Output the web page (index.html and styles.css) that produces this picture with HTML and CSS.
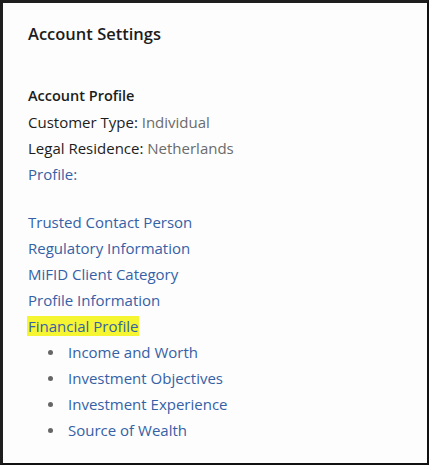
FILE: index.html
```html
<!DOCTYPE html>
<html>
<head>
<meta charset="utf-8">
<link rel="stylesheet" href="styles.css">
</head>
<body>
<div class="frame">
  <h1 class="title">Account Settings</h1>
  <h2 class="section">Account Profile</h2>
  <div class="row">Customer Type: <span class="val">Individual</span></div>
  <div class="row">Legal Residence: <span class="val">Netherlands</span></div>
  <div class="row"><a class="link">Profile:</a></div>
  <ul class="links">
    <li><a class="link">Trusted Contact Person</a></li>
    <li><a class="link">Regulatory Information</a></li>
    <li><a class="link">MiFID Client Category</a></li>
    <li><a class="link">Profile Information</a></li>
    <li><a class="link hl">Financial Profile</a>
      <ul class="sub">
        <li><a class="link">Income and Worth</a></li>
        <li><a class="link">Investment Objectives</a></li>
        <li><a class="link">Investment Experience</a></li>
        <li><a class="link">Source of Wealth</a></li>
      </ul>
    </li>
  </ul>
</div>
</body>
</html>
```
FILE: styles.css
```css
html, body { margin: 0; padding: 0; background: #fff; }
body { font-family: "Open Sans", "Noto Sans", sans-serif; color: #1c1c1c; }
.frame {
  box-sizing: border-box;
  width: 429px;
  height: 465px;
  border-top: 3px solid #1e1e1e;
  border-left: 3px solid #1e1e1e;
  border-right: 2px solid #111;
  border-bottom: 2px solid #111;
  background: #fdfdfd;
  padding: 19px 0 0 25px;
}
.title { margin: 0; font-size: 16.5px; font-weight: 600; line-height: 24px; }
.section { margin: 37px 0 0; font-size: 14.5px; font-weight: 600; line-height: 26px; }
.row { font-size: 15px; line-height: 26px; }
.val { color: #6b6b6b; }
.link { color: #3561a6; text-decoration: none; }
.links { list-style: none; margin: 22px 0 0; padding: 0; font-size: 15px; line-height: 26px; }
.hl { background: #f5f532; padding: 0 1px; margin-left: -1px; }
.sub { list-style: none; margin: 0; padding: 0 0 0 20px; }
.sub li { display: flex; align-items: center; height: 26px; }
.sub li::before { content: ""; width: 5px; height: 5px; border-radius: 50%; background: #666; margin: 0 15px 0 0; }
```
